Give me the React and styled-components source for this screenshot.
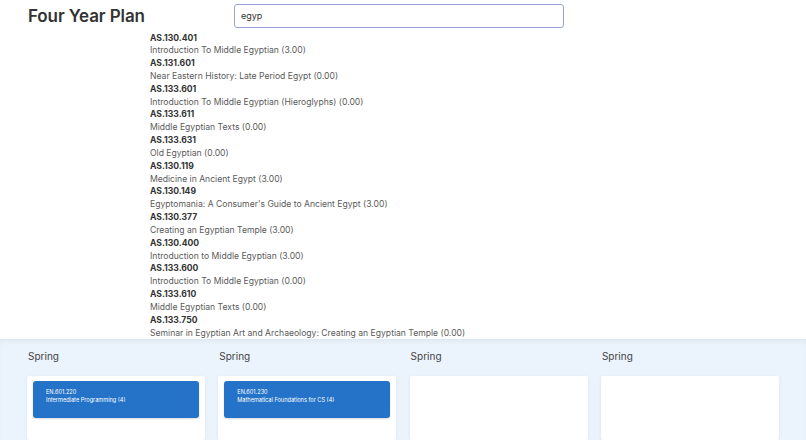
import React from "react";
import styled, { createGlobalStyle } from "styled-components";

const GlobalStyle = createGlobalStyle`
  html, body {
    margin: 0;
    padding: 0;
    background: #fff;
    font-family: Inter, "Liberation Sans", sans-serif;
  }
`;

const results = [
  ["AS.130.401", "Introduction To Middle Egyptian (3.00)"],
  ["AS.131.601", "Near Eastern History: Late Period Egypt (0.00)"],
  ["AS.133.601", "Introduction To Middle Egyptian (Hieroglyphs) (0.00)"],
  ["AS.133.611", "Middle Egyptian Texts (0.00)"],
  ["AS.133.631", "Old Egyptian (0.00)"],
  ["AS.130.119", "Medicine in Ancient Egypt (3.00)"],
  ["AS.130.149", "Egyptomania: A Consumer's Guide to Ancient Egypt (3.00)"],
  ["AS.130.377", "Creating an Egyptian Temple (3.00)"],
  ["AS.130.400", "Introduction to Middle Egyptian (3.00)"],
  ["AS.133.600", "Introduction To Middle Egyptian (0.00)"],
  ["AS.133.610", "Middle Egyptian Texts (0.00)"],
  ["AS.133.750", "Seminar in Egyptian Art and Archaeology: Creating an Egyptian Temple (0.00)"],
];

const semesters = [
  { name: "Spring", courses: [["EN.601.220", "Intermediate Programming (4)"]] },
  { name: "Spring", courses: [["EN.601.230", "Mathematical Foundations for CS (4)"]] },
  { name: "Spring", courses: [] },
  { name: "Spring", courses: [] },
];

export default function App() {
  return (
    <Page>
      <GlobalStyle />
      <Header>
        <Title>Four Year Plan</Title>
        <Search defaultValue="egyp" spellCheck="true" />
      </Header>
      <Results>
        {results.map(([code, name]) => (
          <Result key={code}>
            <Code>{code}</Code>
            <Desc>{name}</Desc>
          </Result>
        ))}
      </Results>
      <Semesters>
        {semesters.map((s, i) => (
          <Semester key={i}>
            <SemesterName>{s.name}</SemesterName>
            <Card>
              {s.courses.map(([code, name]) => (
                <Course key={code}>
                  <div>{code}</div>
                  <div>{name}</div>
                </Course>
              ))}
            </Card>
          </Semester>
        ))}
      </Semesters>
    </Page>
  );
}

const Page = styled.div`
  width: 806px;
  height: 440px;
  overflow: hidden;
  display: flex;
  flex-direction: column;
`;

const Header = styled.div`
  display: flex;
  align-items: center;
  height: 30px;
  padding: 1px 0 0 28px;
  box-sizing: border-box;
`;

const Title = styled.h1`
  width: 206px;
  margin: 0;
  font-size: 17px;
  font-weight: 600;
  color: #333;
  letter-spacing: -0.1px;
`;

const Search = styled.input`
  width: 330px;
  height: 24px;
  box-sizing: border-box;
  border: 1.5px solid #98a3d8;
  border-radius: 3px;
  padding: 0 6px;
  font-family: Inter, "Liberation Sans", sans-serif;
  font-size: 9px;
  color: #333;
  text-decoration: underline wavy #e05050;
  text-decoration-thickness: 0.5px;
  outline: none;
`;

const Results = styled.div`
  margin: 1.5px 0 0 150px;
  font-size: 8.6px;
  line-height: 12.83px;
`;

const Result = styled.div``;

const Code = styled.div`
  font-weight: 700;
  color: #333;
`;

const Desc = styled.div`
  color: #5a5a5a;
`;

const Semesters = styled.div`
  flex: 1;
  display: grid;
  grid-template-columns: repeat(4, 178px);
  column-gap: 13.3px;
  padding: 9.5px 27px 0;
  background: #ebf3fc;
  box-shadow: inset 0 4px 6px -3px rgba(0, 0, 0, 0.08);
`;

const Semester = styled.div`
  display: flex;
  flex-direction: column;
  gap: 13px;
`;

const SemesterName = styled.div`
  font-size: 10px;
  line-height: 14px;
  color: #444;
  padding-left: 1px;
`;

const Card = styled.div`
  flex: 1;
  background: #fff;
  border-radius: 2px;
  padding: 5px 6px;
  box-shadow: 0 1px 4px rgba(0, 0, 0, 0.06);
`;

const Course = styled.div`
  height: 37px;
  box-sizing: border-box;
  padding: 7px 13px;
  background: #2473c8;
  border-radius: 3px;
  box-shadow: 0 1px 2px rgba(0, 0, 0, 0.15);
  color: #fff;
  font-size: 5.6px;
  line-height: 8px;
`;
